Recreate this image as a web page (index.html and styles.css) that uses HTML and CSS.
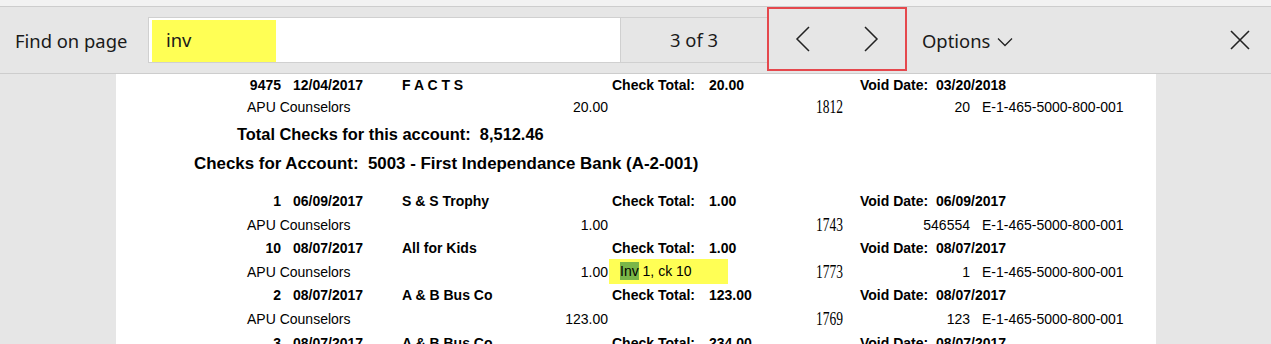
FILE: index.html
```html
<!DOCTYPE html>
<html>
<head>
<meta charset="utf-8">
<link rel="stylesheet" href="styles.css">
</head>
<body>
<div class="topstrip"></div>
<div class="findbar">
  <div class="label">Find on page</div>
  <div class="search"><span class="query">inv</span></div>
  <div class="counter">3 of 3</div>
  <div class="nav">
    <button class="navbtn" aria-label="Previous">
      <svg width="16" height="26" viewBox="0 0 16 26"><path d="M14 1 L2 13 L14 25" fill="none" stroke="#222" stroke-width="1.5"/></svg>
    </button>
    <button class="navbtn" aria-label="Next">
      <svg width="16" height="26" viewBox="0 0 16 26"><path d="M2 1 L14 13 L2 25" fill="none" stroke="#222" stroke-width="1.5"/></svg>
    </button>
  </div>
  <div class="options">Options
    <svg class="caret" width="16" height="10" viewBox="0 0 16 10"><path d="M1 1.5 L8 8.5 L15 1.5" fill="none" stroke="#222" stroke-width="1.3"/></svg>
  </div>
  <div class="spacer"></div>
  <button class="close" aria-label="Close">
    <svg width="20" height="20" viewBox="0 0 20 20"><path d="M1 1 L19 19 M19 1 L1 19" fill="none" stroke="#222" stroke-width="1.6"/></svg>
  </button>
</div>
<div class="page">
  <div class="doc">
    <div class="first">
      <div class="hrow"><span class="num">9475</span><span class="date">12/04/2017</span><span class="payee">F A C T S</span><span>Check Total:</span><span>20.00</span><span>Void Date:</span><span>03/20/2018</span></div>
      <div class="drow"><span></span><span>APU Counselors</span><span class="r">20.00</span><span class="memo"></span><span class="r"><span class="chk">1812</span></span><span class="r">20</span><span class="acct">E-1-465-5000-800-001</span></div>
    </div>
    <div class="total">Total Checks for this account:&nbsp;&nbsp;8,512.46</div>
    <div class="account">Checks for Account:&nbsp;&nbsp;5003 - First Independance Bank (A-2-001)</div>
    <div class="rows">
      <div class="hrow"><span class="num">1</span><span class="date">06/09/2017</span><span class="payee">S &amp; S Trophy</span><span>Check Total:</span><span>1.00</span><span>Void Date:</span><span>06/09/2017</span></div>
      <div class="drow"><span></span><span>APU Counselors</span><span class="r">1.00</span><span class="memo"></span><span class="r"><span class="chk">1743</span></span><span class="r">546554</span><span class="acct">E-1-465-5000-800-001</span></div>
      <div class="hrow"><span class="num">10</span><span class="date">08/07/2017</span><span class="payee">All for Kids</span><span>Check Total:</span><span>1.00</span><span>Void Date:</span><span>08/07/2017</span></div>
      <div class="drow"><span></span><span>APU Counselors</span><span class="r">1.00</span><span class="memo"><span class="match"><span class="current">Inv</span> 1, ck 10</span></span><span class="r"><span class="chk">1773</span></span><span class="r">1</span><span class="acct">E-1-465-5000-800-001</span></div>
      <div class="hrow"><span class="num">2</span><span class="date">08/07/2017</span><span class="payee">A &amp; B Bus Co</span><span>Check Total:</span><span>123.00</span><span>Void Date:</span><span>08/07/2017</span></div>
      <div class="drow"><span></span><span>APU Counselors</span><span class="r">123.00</span><span class="memo"></span><span class="r"><span class="chk">1769</span></span><span class="r">123</span><span class="acct">E-1-465-5000-800-001</span></div>
      <div class="hrow"><span class="num">3</span><span class="date">08/07/2017</span><span class="payee">A &amp; B Bus Co</span><span>Check Total:</span><span>234.00</span><span>Void Date:</span><span>08/07/2017</span></div>
    </div>
  </div>
</div>
</body>
</html>
```
FILE: styles.css
```css
html, body {
  margin: 0;
  padding: 0;
  height: 100%;
  overflow: hidden;
}
body {
  background: #e6e6e6;
  font-family: "Noto Sans", "Open Sans", sans-serif;
  color: #1a1a1a;
}
.topstrip {
  height: 6px;
  background: #f2f2f2;
  border-bottom: 1px solid #cdcdcd;
}
.findbar {
  height: 67px;
  display: flex;
  align-items: center;
  background: #e6e6e6;
  border-bottom: 1px solid #cdcdcd;
  box-sizing: border-box;
}
.label {
  width: 148px;
  padding-left: 15px;
  font-size: 18.4px;
  box-sizing: border-box;
}
.search {
  width: 472px;
  height: 46px;
  box-sizing: border-box;
  border: 1px solid #d0d0d0;
  border-right: none;
  background: #fff;
  padding: 2px 3px;
  display: flex;
}
.query {
  width: 124px;
  height: 42px;
  background: #ffff55;
  padding-left: 14px;
  box-sizing: border-box;
  font-size: 18.4px;
  line-height: 40px;
}
.counter {
  width: 147px;
  height: 46px;
  box-sizing: border-box;
  border: 1px solid #d0d0d0;
  border-right: none;
  display: flex;
  align-items: center;
  justify-content: center;
  font-size: 18.4px;
  padding-bottom: 2px;
}
.nav {
  width: 140px;
  height: 64px;
  box-sizing: border-box;
  border: 2px solid #e5484d;
  display: flex;
  align-items: center;
  align-self: flex-start;
}
.navbtn {
  flex: 1;
  height: 100%;
  border: none;
  background: transparent;
  padding: 0;
  display: flex;
  align-items: center;
  justify-content: center;
}
.options {
  margin-left: 15px;
  font-size: 18.4px;
  display: flex;
  align-items: center;
}
.caret {
  margin-left: 7px;
  margin-top: 3px;
}
.spacer { flex: 1; }
.close {
  border: none;
  background: transparent;
  padding: 0;
  margin-right: 21px;
  display: flex;
}
.page {
  padding-left: 116px;
}
.doc {
  width: 1040px;
  height: 280px;
  background: #fff;
  font-family: "Liberation Sans", Arial, sans-serif;
  font-size: 14px;
  color: #000;
}
.hrow, .drow {
  display: grid;
  white-space: nowrap;
}
.hrow {
  grid-template-columns: 165px 121px 210px 97px 151px 76px 1fr;
  font-weight: bold;
}
.drow {
  grid-template-columns: 131px 213px 148px 182px 53px 127px 1fr;
}
.first .hrow, .first .drow {
  height: 22px;
  line-height: 22px;
}
.rows {
  margin-top: 15px;
}
.rows .hrow, .rows .drow {
  height: 23.6px;
  line-height: 23.6px;
}
.num { text-align: right; }
.date { padding-left: 12px; }
.r { text-align: right; }
.acct { padding-left: 12px; }
.chk {
  display: inline-block;
  font-family: "Liberation Serif", "Times New Roman", serif;
  font-size: 18px;
  transform: scaleX(0.75);
  transform-origin: right center;
}
.memo { padding-left: 1px; }
.match {
  display: inline-block;
  background: #ffff55;
  width: 119px;
  height: 25px;
  line-height: 25px;
  padding-left: 11px;
  box-sizing: border-box;
  vertical-align: top;
  margin-top: -2px;
}
.current {
  background: #7ab648;
  display: inline-block;
  line-height: 18px;
}
.total {
  margin-top: 5px;
  margin-left: 121px;
  font-size: 16.4px;
  font-weight: bold;
  line-height: 22px;
}
.account {
  margin-top: 8px;
  margin-left: 78px;
  font-size: 16.9px;
  font-weight: bold;
  line-height: 22px;
}
```
